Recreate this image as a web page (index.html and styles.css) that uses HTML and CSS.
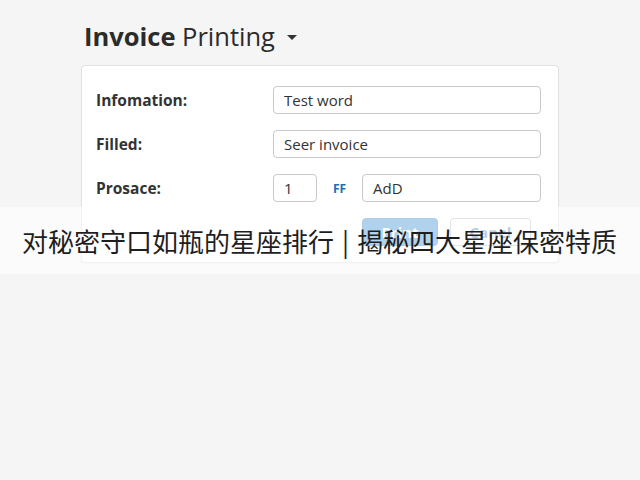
FILE: index.html
```html
<!DOCTYPE html>
<html lang="zh">
<head>
    <meta charset="UTF-8">
    <title>Invoice Printing</title>
    <link rel="stylesheet" href="styles.css">
</head>
<body>
    <div class="page">
        <h1 class="title"><b>Invoice</b> Printing <span class="caret"></span></h1>

        <div class="card">
            <div class="row">
                <label class="label">Infomation:</label>
                <div class="field">Test word</div>
            </div>
            <div class="row">
                <label class="label">Filled:</label>
                <div class="field">Seer invoice</div>
            </div>
            <div class="row">
                <label class="label">Prosace:</label>
                <div class="field field-small">1</div>
                <span class="ff">FF</span>
                <div class="field field-rest">AdD</div>
            </div>
            <div class="actions">
                <button class="btn btn-print">Print</button>
                <button class="btn btn-cancel">Canel</button>
            </div>
        </div>
    </div>

    <div class="banner">对秘密守口如瓶的星座排行<span class="sep">|</span>揭秘四大星座保密特质</div>
</body>
</html>
```

FILE: styles.css
```css
* {
    margin: 0;
    padding: 0;
    box-sizing: border-box;
}

body {
    font-family: 'Open Sans', 'Noto Sans', sans-serif;
    background: #f5f5f5;
    color: #333;
    width: 640px;
    height: 480px;
    overflow: hidden;
    position: relative;
}

.page {
    padding: 19px 0 0 81px;
}

.title {
    font-size: 25.5px;
    font-weight: normal;
    color: #2b2b2b;
    padding-left: 3px;
    line-height: 34px;
    height: 46px;
}

.title b {
    font-weight: bold;
}

.caret {
    display: inline-block;
    width: 0;
    height: 0;
    border-left: 5px solid transparent;
    border-right: 5px solid transparent;
    border-top: 5px solid #333;
    vertical-align: middle;
    margin-left: 5px;
    margin-bottom: 4px;
}

.card {
    width: 478px;
    background: #fff;
    border: 1px solid #e2e2e2;
    border-radius: 4px;
    padding: 20px 17px 16px 14px;
    box-shadow: 0 1px 2px rgba(0, 0, 0, 0.04);
}

.row {
    display: flex;
    align-items: center;
    height: 28px;
    margin-bottom: 16px;
}

.label {
    width: 177px;
    font-size: 15.5px;
    font-weight: bold;
    color: #333;
}

.field {
    flex: 1;
    height: 28px;
    border: 1px solid #c9c9c9;
    border-radius: 4px;
    padding: 0 10px;
    font-size: 15px;
    line-height: 26px;
    color: #333;
}

.field-small {
    flex: 0 0 44px;
}

.ff {
    width: 45px;
    text-align: center;
    font-size: 12px;
    font-weight: bold;
    color: #1a70b8;
}

.actions {
    display: flex;
    justify-content: flex-end;
    gap: 12px;
    padding-right: 10px;
}

.btn {
    height: 28px;
    border-radius: 4px;
    font-family: 'Open Sans', sans-serif;
    font-size: 15px;
    font-weight: bold;
}

.btn-print {
    width: 76px;
    background: #539bd5;
    border: 1px solid #4a90c9;
    color: #fff;
}

.btn-cancel {
    width: 81px;
    background: #fff;
    border: 1px solid #b9c3cc;
    color: #5f93c2;
}

.banner {
    position: absolute;
    left: 0;
    top: 207px;
    width: 640px;
    height: 67px;
    background: rgba(255, 255, 255, 0.55);
    padding-left: 22px;
    font-family: 'Noto Sans CJK SC', sans-serif;
    font-size: 26px;
    line-height: 67px;
    color: #1e1e1e;
    white-space: nowrap;
}

.sep {
    margin: 0 8px;
}
```
